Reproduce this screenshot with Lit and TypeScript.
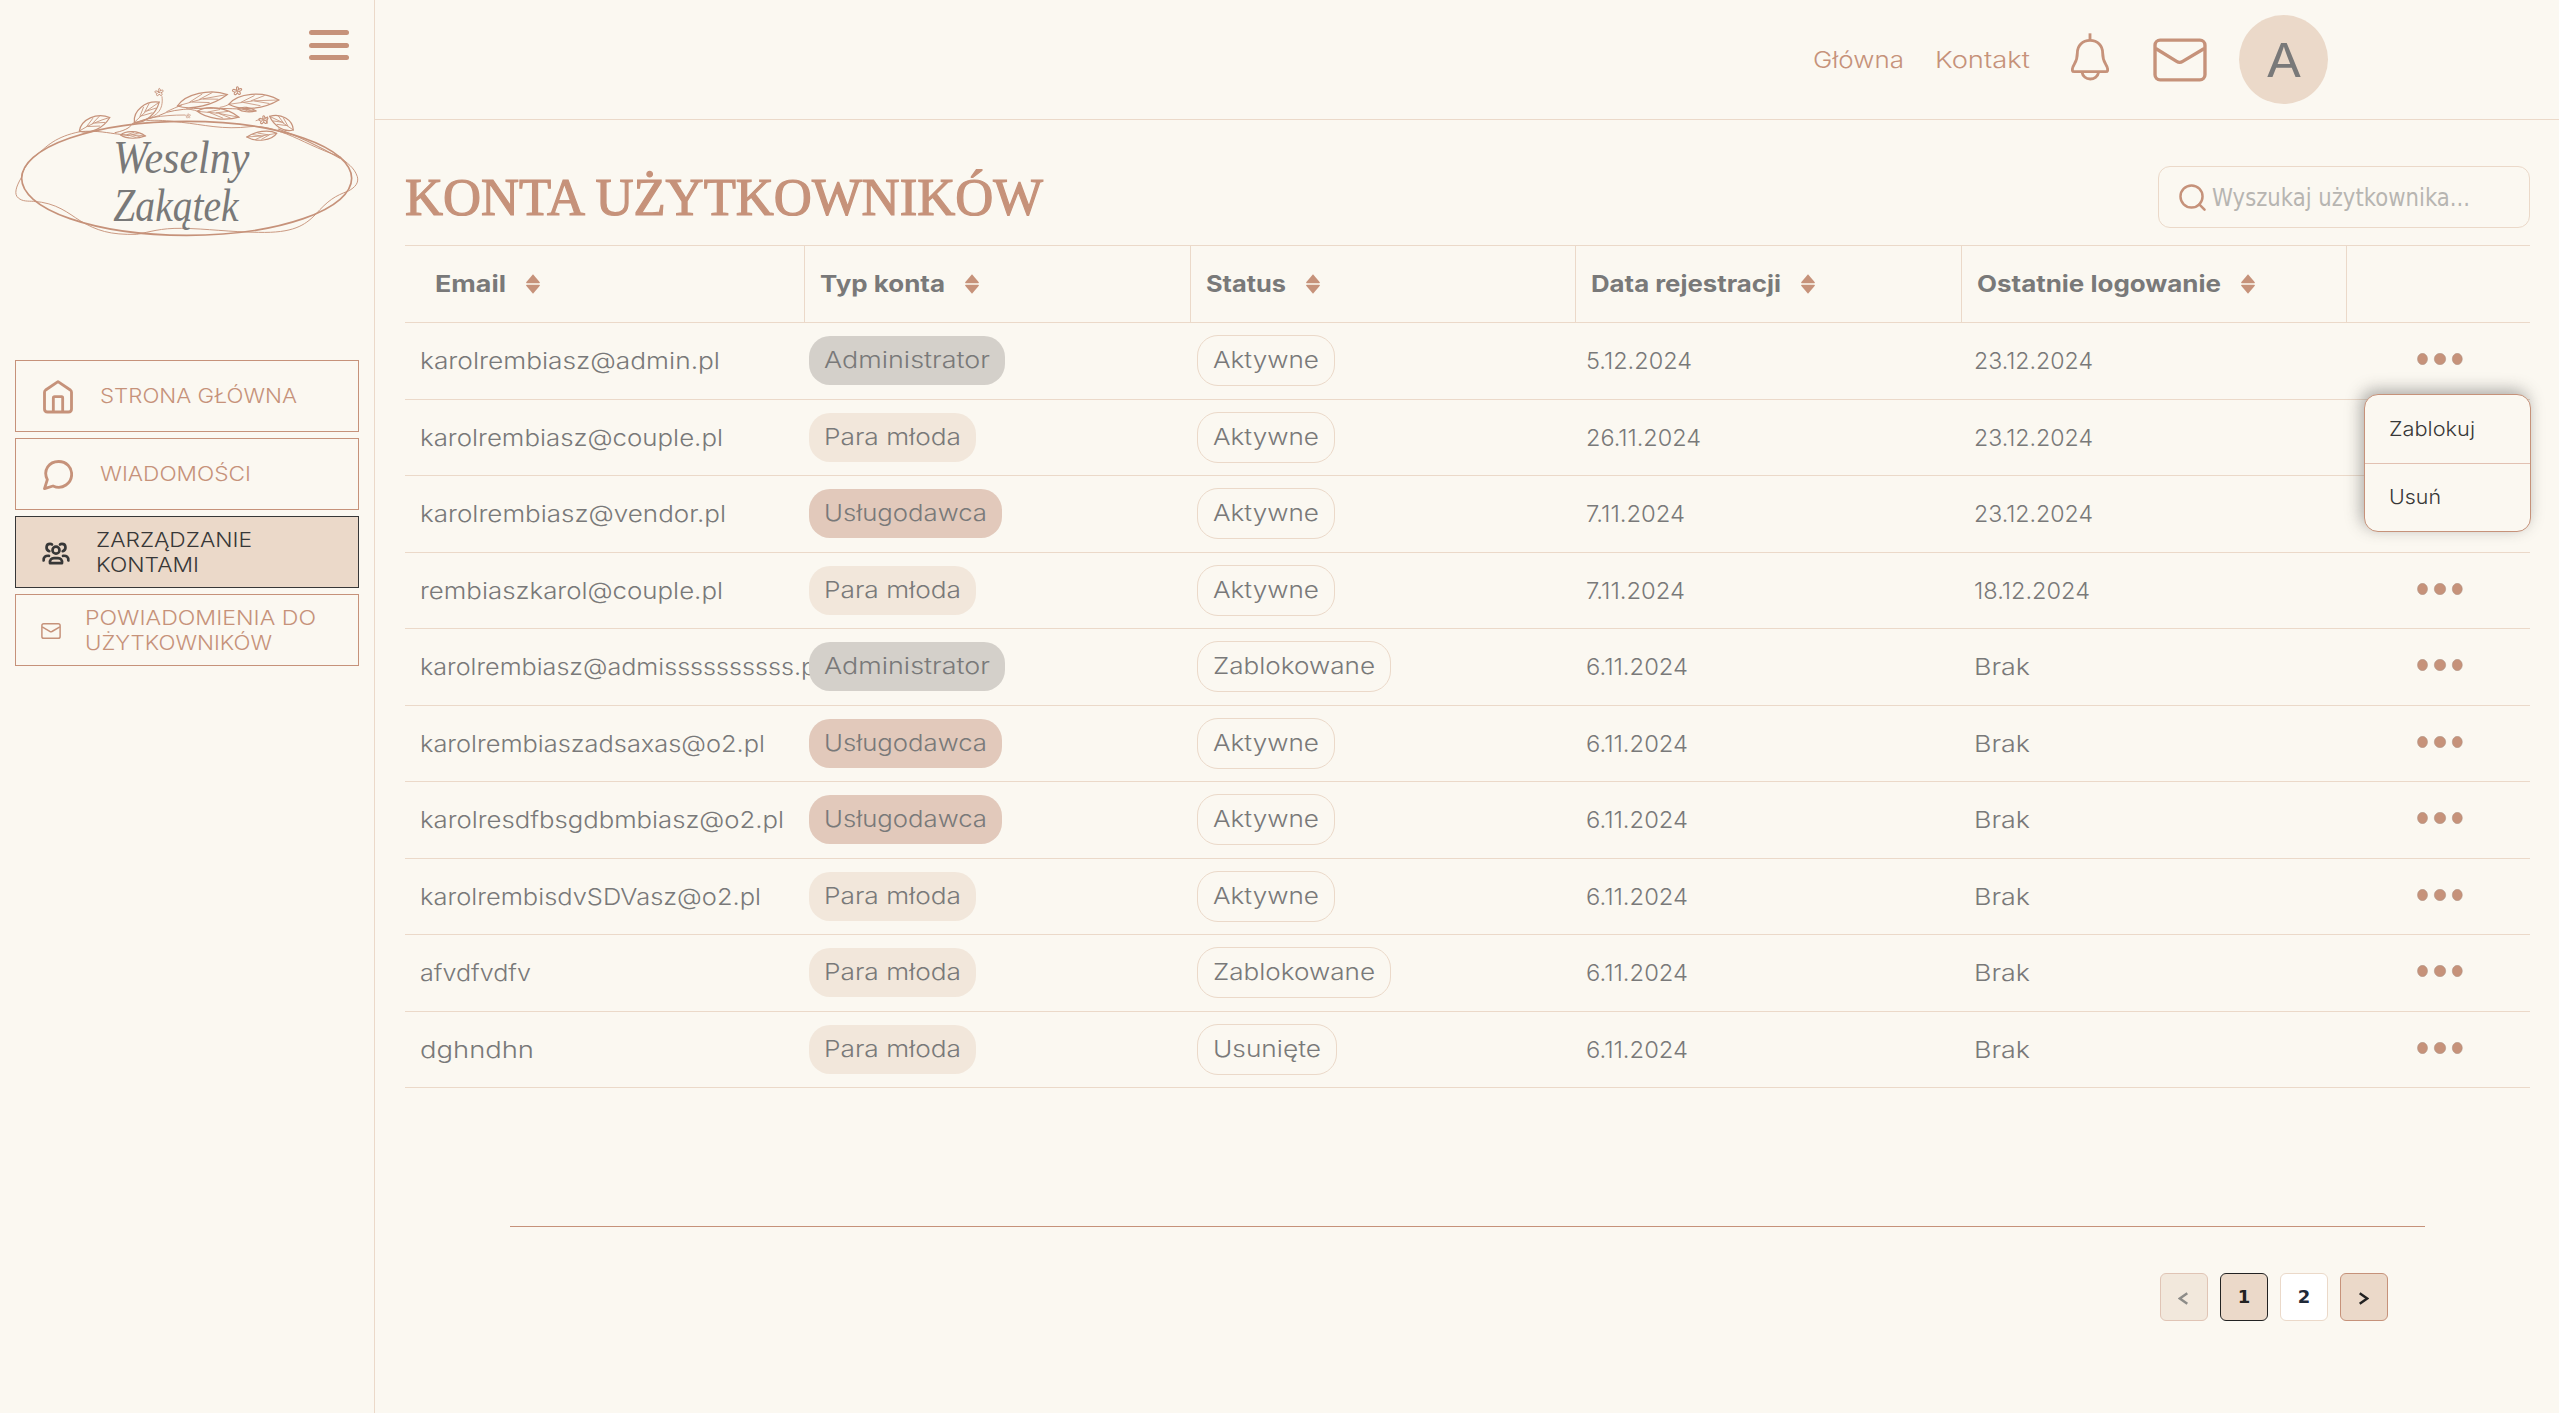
import { LitElement, html, css, svg } from "lit";
import { customElement, property, query } from "lit/decorators.js";

/** One line of text stretched horizontally to a given advance width. */
@customElement("fit-text")
class FitText extends LitElement {
  @property() text = "";
  @property({ type: Number }) w = 0;
  @query(".line") line!: HTMLElement;

  static styles = css`
    :host { display: block; flex: none; white-space: nowrap; }
    .line { display: inline-block; transform-origin: 0 50%; }
  `;

  updated() {
    this.style.width = `${this.w}px`;
    this.line.style.transform = "none";
    const natural = this.line.getBoundingClientRect().width;
    if (natural > 0) this.line.style.transform = `scaleX(${this.w / natural})`;
  }

  render() {
    return html`<span class="line">${this.text}</span>`;
  }
}

const fit = (text: string, w: number) => html`<fit-text .text=${text} .w=${w}></fit-text>`;

const leaf = (x: number, y: number, angle: number, len: number, h: number) => svg`
  <g transform="translate(${x} ${y}) rotate(${angle})">
    <path d="M0 0 C${len * 0.2} ${-h} ${len * 0.7} ${-h} ${len} 0 C${len * 0.7} ${h * 0.7} ${len * 0.25} ${h * 0.8} 0 0Z" stroke-width="3.6"/>
    <path d="M0 0 Q${len * 0.5} ${-h * 0.25} ${len} 0 M${len * 0.25} ${-h * 0.1} L${len * 0.52} ${-h * 0.6} M${len * 0.45} ${-h * 0.15} L${len * 0.72} ${-h * 0.52} M${len * 0.3} ${-h * 0.05} L${len * 0.62} ${h * 0.38} M${len * 0.52} ${-h * 0.1} L${len * 0.8} ${h * 0.25}" stroke-width="2.4"/>
  </g>`;

const flower = (x: number, y: number, s: number) => svg`
  <path transform="translate(${x} ${y}) scale(${s})" stroke-width="3"
    d="M0 -3 C-5 -14 5 -15 4 -4 C13 -11 17 -2 6 1 C14 8 5 14 1 5 C-3 14 -12 9 -5 3 C-16 2 -14 -8 -4 -3Z M-2 0 L3 1"/>`;

const logo = html`
  <svg class="logo" viewBox="45 258 1035 456" fill="none" stroke="#c6927a" stroke-linecap="round">
    <ellipse cx="560" cy="535" rx="495" ry="171" stroke-width="5"/>
    <path stroke-width="2.8" d="M240 395 C165 410 140 440 118 458 C86 482 67 508 64 533 C48 560 41 583 55 594 C68 605 84 603 100 604 C170 608 205 640 240 662 C290 692 330 705 410 703 C450 696 480 684 545 685 C620 686 690 696 775 697 C880 700 915 675 945 645 C985 600 1005 588 1045 573 C1066 562 1077 548 1072 530 C1062 500 1040 490 1020 470 C955 448 905 420 860 402 C815 386 790 377 750 380 C670 390 610 374 545 367 C500 362 470 359 440 362"/>
    <path stroke-width="3.4" d="M835 387 C900 410 985 455 1020 475"/>
    <path stroke-width="3" d="M240 395 C290 390 330 400 352 402 C368 404 375 404 385 407"/>
    <path stroke-width="3" d="M345 398 C385 390 392 378 398 370 C430 360 470 352 500 337 C560 320 660 325 720 327"/>
    <path stroke-width="2.6" d="M400 372 C430 355 480 345 555 345 M440 357 C480 345 490 320 486 290"/>
    <path stroke-width="2.6" d="M500 335 C520 325 530 322 545 315 M660 322 C675 320 682 315 690 312 M560 326 C580 330 590 332 600 336"/>
    ${leaf(238, 393, -24, 100, 30)}
    ${leaf(403, 367, -39, 96, 30)}
    ${leaf(532, 318, -13, 154, 30)}
    ${leaf(686, 313, -5, 151, 32)}
    ${leaf(592, 334, 8, 126, 24)}
    ${leaf(714, 327, 6, 54, 10)}
    ${leaf(880, 390, -150, 82, -26)}
    ${leaf(830, 400, 173, 90, 20)}
    ${leaf(362, 405, 2, 74, 15)}
    ${flower(477, 277, 1)}
    ${flower(711, 273, 1.1)}
    ${flower(790, 360, 1.1)}
    ${flower(564, 348, 0.6)}
    <path stroke-width="2.4" d="M768 362 L780 358 M802 350 L802 370"/>
    <g class="script">
      <text x="340" y="519" textLength="408" lengthAdjust="spacingAndGlyphs">Weselny</text>
      <text x="340" y="664" textLength="376" lengthAdjust="spacingAndGlyphs">Zakątek</text>
    </g>
  </svg>`;

const homeIcon = html`
  <svg class="icon-home" viewBox="0 0 90 102" fill="none" stroke="currentColor" stroke-width="8.5" stroke-linejoin="round">
    <path d="M4.500 37 Q4.500 33 8 30 L45 5 L82 30 Q85.500 33 85.500 37 V87 Q85.500 96 76 96 H14 Q4.500 96 4.500 87Z"/>
    <path d="M31 96 V54 Q31 50 35 50 H56 Q59 50 59 54 V96" stroke-linejoin="miter"/>
  </svg>`;

const chatIcon = html`
  <svg class="icon-chat" viewBox="0 0 90 90" fill="none" stroke="currentColor" stroke-width="8.5" stroke-linejoin="round">
    <path d="M4.500 86 L13 59 C-1 31 18 4.500 47 4.500 C70 4.500 86 22 86 43 C86 69 59 91 30 78Z"/>
  </svg>`;

const groupIcon = html`
  <svg class="icon-group" viewBox="127 602 84 68" fill="none" stroke="currentColor" stroke-width="8" stroke-linecap="round">
    <circle cx="169" cy="626" r="10.500"/>
    <path d="M151 665 C150 654 155 650 163 650 H175 C183 650 188 654 187 665Z" stroke-linejoin="round"/>
    <path d="M149 629 C137 625 138 607 151 607 Q155 607 157 609"/>
    <path d="M189 629 C201 625 200 607 187 607 Q183 607 181 609"/>
    <path d="M132 657 C131 647 137 642 148 643"/>
    <path d="M206 657 C207 647 201 642 190 643"/>
  </svg>`;

const mailShape = svg`
  <rect x="6" y="6" width="148" height="118" rx="15"/>
  <path d="M8 31 L70 69 Q79 75 88 69 L152 31"/>`;

const smallMailIcon = html`
  <svg class="icon-mail-small" viewBox="0 0 160 130" fill="none" stroke="currentColor" stroke-width="12">${mailShape}</svg>`;

const mailIcon = html`
  <svg class="icon-mail" viewBox="0 0 160 130" fill="none" stroke="currentColor" stroke-width="10" stroke-linejoin="round">${mailShape}</svg>`;

const bellIcon = html`
  <svg class="icon-bell" viewBox="94 68 114 144" fill="none" stroke="currentColor" stroke-width="8.500" stroke-linejoin="round">
    <path d="M151 69 V90"/>
    <path d="M151 90 C128 90 113 106 113 128 C113 162 98 160 98 179 Q98 184 104 184 H198 Q204 184 204 179 C204 160 189 162 189 128 C189 106 174 90 151 90Z"/>
    <path d="M127 185 C131 213 172 213 177 185"/>
  </svg>`;

const searchIcon = html`
  <svg class="icon-search" viewBox="0 0 81 82" fill="none" stroke="currentColor" stroke-width="7.500" stroke-linecap="round">
    <circle cx="37.500" cy="38" r="33.500"/>
    <path d="M61 62 L77 78"/>
  </svg>`;

const sortIcon = html`
  <svg class="icon-sort" viewBox="0 0 14 20" fill="currentColor">
    <path d="M7 0.300 L13.800 8.200 Q14 9.200 13.200 9.200 H0.800 Q0 9.200 0.200 8.200Z"/>
    <path d="M7 19.700 L13.800 11.800 Q14 10.800 13.200 10.800 H0.800 Q0 10.800 0.200 11.800Z"/>
  </svg>`;

const dots = html`
  <svg class="dots" viewBox="0 0 46 12" fill="#c6927a" stroke="#a98f80" stroke-width="0.500">
    <ellipse cx="5.500" cy="6" rx="5" ry="5.700"/>
    <ellipse cx="23" cy="6" rx="5.700" ry="5.700"/>
    <ellipse cx="40.300" cy="6" rx="5" ry="5.700"/>
  </svg>`;

type Cell = [string, number];
const ADMIN: Cell = ["Administrator", 166];
const COUPLE: Cell = ["Para młoda", 137];
const VENDOR: Cell = ["Usługodawca", 163];
const ACTIVE: Cell = ["Aktywne", 106];
const BLOCKED: Cell = ["Zablokowane", 162];
const REMOVED: Cell = ["Usunięte", 108];
const NEVER: Cell = ["Brak", 56];

const kinds = new Map<Cell, string>([[ADMIN, "admin"], [COUPLE, "couple"], [VENDOR, "vendor"]]);

const rows: { mail: Cell; kind: Cell; status: Cell; joined: Cell; last: Cell }[] = [
  { mail: ["karolrembiasz@admin.pl", 300], kind: ADMIN, status: ACTIVE, joined: ["5.12.2024", 106], last: ["23.12.2024", 119] },
  { mail: ["karolrembiasz@couple.pl", 303], kind: COUPLE, status: ACTIVE, joined: ["26.11.2024", 115], last: ["23.12.2024", 119] },
  { mail: ["karolrembiasz@vendor.pl", 306], kind: VENDOR, status: ACTIVE, joined: ["7.11.2024", 99], last: ["23.12.2024", 119] },
  { mail: ["rembiaszkarol@couple.pl", 303], kind: COUPLE, status: ACTIVE, joined: ["7.11.2024", 99], last: ["18.12.2024", 116] },
  { mail: ["karolrembiasz@admissssssssss.pl", 402], kind: ADMIN, status: BLOCKED, joined: ["6.11.2024", 102], last: NEVER },
  { mail: ["karolrembiaszadsaxas@o2.pl", 345], kind: VENDOR, status: ACTIVE, joined: ["6.11.2024", 102], last: NEVER },
  { mail: ["karolresdfbsgdbmbiasz@o2.pl", 364], kind: VENDOR, status: ACTIVE, joined: ["6.11.2024", 102], last: NEVER },
  { mail: ["karolrembisdvSDVasz@o2.pl", 341], kind: COUPLE, status: ACTIVE, joined: ["6.11.2024", 102], last: NEVER },
  { mail: ["afvdfvdfv", 111], kind: COUPLE, status: BLOCKED, joined: ["6.11.2024", 102], last: NEVER },
  { mail: ["dghndhn", 114], kind: COUPLE, status: REMOVED, joined: ["6.11.2024", 102], last: NEVER },
];

const columns: Cell[] = [
  ["Email", 71], ["Typ konta", 125], ["Status", 80], ["Data rejestracji", 190], ["Ostatnie logowanie", 244],
];

@customElement("app-root")
class AppRoot extends LitElement {
  static styles = css`
    :host {
      display: block;
      font-family: Inter, "Open Sans", sans-serif;
      font-size: 23px;
      color: #797979;
    }
    * { box-sizing: border-box; }
    svg { display: block; flex: none; }
    .page { display: flex; width: 2559px; height: 1413px; background: #fbf8f1; overflow: hidden; }

    .sidebar { flex: none; width: 375px; padding: 30px 15px 0; border-right: 1px solid #ebd9c9; color: #c6927a; }
    .burger { display: flex; flex-direction: column; justify-content: space-between; width: 40px; height: 30px; margin-left: 294px; }
    .bar { height: 5px; border-radius: 3px; background: #c6927a; }
    .logo { width: 345px; height: 152px; margin-top: 26px; overflow: visible; }
    .script { font: italic 140px "Liberation Serif", serif; fill: #797979; stroke: none; }
    .nav { display: flex; flex-direction: column; gap: 6px; margin-top: 122px; }
    .item { display: flex; align-items: center; height: 72px; width: 344px; padding: 1px 0 0 27px; border: 1px solid #c6927a; font-size: 20px; line-height: 25px; font-weight: 300; }
    .item.active { background: #ebd9c9; border-color: #373737; color: #373737; }
    .item.narrow { padding-left: 25px; }
    .icon-home { width: 30px; height: 34px; margin-right: 27px; }
    .icon-chat { width: 30px; height: 30px; margin-right: 27px; }
    .icon-group { width: 28px; height: 23px; margin: 2px 26px 0 -1px; }
    .icon-mail-small { width: 20px; height: 16px; margin-right: 24px; }

    .main { flex: 1; }
    .topbar { display: flex; align-items: center; justify-content: flex-end; height: 120px; padding-right: 231px; border-bottom: 1px solid #ebd9c9; color: #c6927a; font-weight: 300; }
    .link + .link { margin-left: 31px; }
    .icon-bell { width: 38px; height: 48px; margin: -5px 44px 0 41px; }
    .icon-mail { width: 54px; height: 44px; margin-right: 32px; }
    .avatar { display: flex; align-items: center; justify-content: center; width: 89px; height: 89px; border-radius: 50%; background: #ebd9c9; color: #797979; font-size: 47px; font-weight: 400; }

    .content { padding: 0 29px 0 30px; }
    .heading { display: flex; align-items: center; justify-content: space-between; height: 125px; padding-top: 29px; }
    .title { margin: 2px 0 0; font: 400 52px/60px "Liberation Serif", serif; color: #c6927a; -webkit-text-stroke: 1.2px #c6927a; }
    .search { display: flex; align-items: center; width: 372px; height: 62px; padding: 1px 0 0 20px; border: 1px solid #ebd9c9; border-radius: 12px; font: 25px/30px "DejaVu Sans", sans-serif; color: #b7b5b1; }
    .icon-search { width: 27px; height: 27px; margin-right: 6px; color: #c6927a; }

    .table { border-top: 1px solid #ebd9c9; }
    .row { display: grid; grid-template-columns: 399px 386px 385px 386px 385px 184px; border-bottom: 1px solid #ebd9c9; }
    .row > * { display: flex; align-items: center; min-width: 0; }
    .head { height: 77px; font-weight: 700; font-size: 23px; }
    .th { gap: 20px; padding-left: 15px; border-left: 1px solid #ebd9c9; }
    .th:first-child { padding-left: 30px; border-left: 0; }
    .icon-sort { width: 14px; height: 20px; color: #c6927a; }
    .body .row { height: 76px; font-weight: 300; }
    .body .row:nth-child(odd) { height: 77px; }
    .mail { padding-left: 15px; }
    .kind { padding-left: 5px; }
    .status { padding-left: 7px; }
    .joined { padding-left: 11px; }
    .last { padding-left: 13px; }
    .more { padding: 0 0 4px 71px; position: relative; }
    .dots { width: 46px; height: 12px; }
    .pill { position: relative; z-index: 1; padding: 0 15px; border-radius: 21px; height: 49px; line-height: 49px; margin-bottom: 1px; }
    .pill.admin { background: #d4d0ca; }
    .pill.couple { background: #f2e7db; }
    .pill.vendor { background: #e2c9bb; }
    .pill.outline { height: 51px; border: 1px solid #ebd9c9; }

    .menu { position: absolute; z-index: 5; top: 71px; right: -1px; width: 167px; height: 138px; border: 1px solid #c6927a; border-radius: 14px; background: #fbf8f1; box-shadow: -3px -4px 16px rgba(55, 55, 55, 0.4); color: #373737; font-size: 19.500px; }
    .option { display: flex; align-items: center; height: 68px; padding: 0 0 1px 24px; }
    .option + .option { border-top: 1px solid #e2c1b2; }

    .divider { height: 1px; margin: 138px 105px 0; background: #c6927a; }
    .pager { display: flex; justify-content: flex-end; gap: 12px; margin: 46px 142px 0 0; }
    .page-btn { display: flex; align-items: center; justify-content: center; width: 48px; height: 48px; border: 1px solid #ebd9c9; border-radius: 6px; background: #fff; color: #1f2937; font: 700 18px/20px "DejaVu Sans", sans-serif; padding-bottom: 1px; }
    .page-btn.current { background: #ebd9c9; border-color: #222; color: #222; }
    .page-btn.step { background: #ebd9c9; border-color: #c6927a; color: #222; padding: 3px 0 0; }
    .page-btn.off { opacity: 0.5; padding-right: 2px; }
    .chevron { width: 10px; height: 13px; }
  `;

  render() {
    return html`
      <div class="page">
        <aside class="sidebar">
          <div class="burger"><div class="bar"></div><div class="bar"></div><div class="bar"></div></div>
          ${logo}
          <nav class="nav">
            <div class="item">${homeIcon}<div>${fit("STRONA GŁÓWNA", 197)}</div></div>
            <div class="item">${chatIcon}<div>${fit("WIADOMOŚCI", 151)}</div></div>
            <div class="item active">${groupIcon}<div>${fit("ZARZĄDZANIE", 156)}${fit("KONTAMI", 103)}</div></div>
            <div class="item narrow">${smallMailIcon}<div>${fit("POWIADOMIENIA DO", 231)}${fit("UŻYTKOWNIKÓW", 187)}</div></div>
          </nav>
        </aside>
        <main class="main">
          <header class="topbar">
            <div class="link">${fit("Główna", 91)}</div>
            <div class="link">${fit("Kontakt", 95)}</div>
            ${bellIcon}${mailIcon}
            <div class="avatar">${fit("A", 36)}</div>
          </header>
          <section class="content">
            <div class="heading">
              <h1 class="title">${fit("KONTA UŻYTKOWNIKÓW", 638)}</h1>
              <div class="search">${searchIcon}${fit("Wyszukaj użytkownika...", 258)}</div>
            </div>
            <div class="table">
              <div class="row head">
                ${columns.map(([label, w]) => html`<div class="th">${fit(label, w)}${sortIcon}</div>`)}
                <div class="th"></div>
              </div>
              <div class="body">
                ${rows.map((r, i) => html`
                  <div class="row">
                    <div class="mail">${fit(...r.mail)}</div>
                    <div class="kind"><div class="pill ${kinds.get(r.kind)}">${fit(...r.kind)}</div></div>
                    <div class="status"><div class="pill outline">${fit(...r.status)}</div></div>
                    <div class="joined">${fit(...r.joined)}</div>
                    <div class="last">${fit(...r.last)}</div>
                    <div class="more">
                      ${dots}
                      ${i === 0 ? html`
                        <div class="menu">
                          <div class="option">${fit("Zablokuj", 86)}</div>
                          <div class="option">${fit("Usuń", 52)}</div>
                        </div>` : ""}
                    </div>
                  </div>`)}
              </div>
            </div>
            <div class="divider"></div>
            <div class="pager">
              <div class="page-btn step off">
                <svg class="chevron" viewBox="0 0 10 13" fill="none" stroke="currentColor" stroke-width="2.500"><path d="M9.300 1.200 L1.800 6.500 L9.300 11.800"/></svg>
              </div>
              <div class="page-btn current">1</div>
              <div class="page-btn">2</div>
              <div class="page-btn step">
                <svg class="chevron" viewBox="0 0 10 13" fill="none" stroke="currentColor" stroke-width="2.500"><path d="M0.700 1.200 L8.200 6.500 L0.700 11.800"/></svg>
              </div>
            </div>
          </section>
        </main>
      </div>`;
  }
}
